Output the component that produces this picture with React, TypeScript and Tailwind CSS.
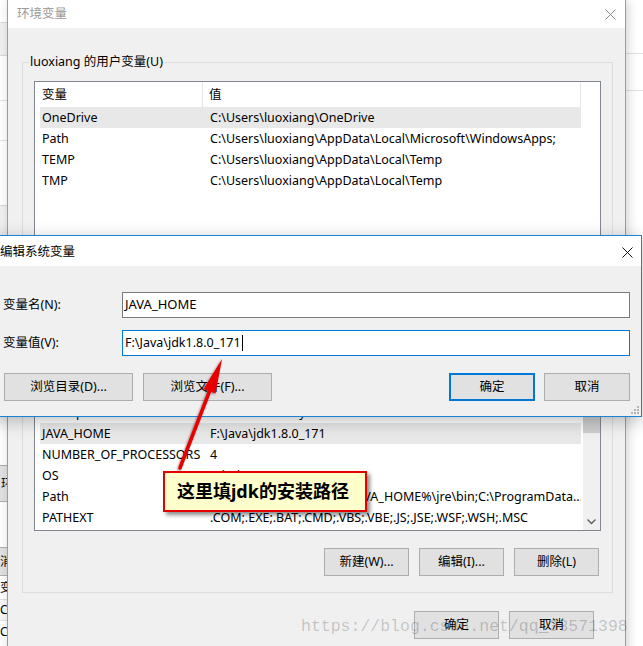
import clsx from 'clsx';

const ui = "font-['Noto_Sans','Noto_Sans_CJK_SC',sans-serif]";

type Row = { name: string; value: string; selected?: boolean };

const userVars: Row[] = [
  { name: 'OneDrive', value: 'C:\\Users\\luoxiang\\OneDrive', selected: true },
  { name: 'Path', value: 'C:\\Users\\luoxiang\\AppData\\Local\\Microsoft\\WindowsApps;' },
  { name: 'TEMP', value: 'C:\\Users\\luoxiang\\AppData\\Local\\Temp' },
  { name: 'TMP', value: 'C:\\Users\\luoxiang\\AppData\\Local\\Temp' },
];

const systemVars: Row[] = [
  { name: 'ComSpec', value: 'C:\\WINDOWS\\system32\\cmd.exe' },
  { name: 'JAVA_HOME', value: 'F:\\Java\\jdk1.8.0_171', selected: true },
  { name: 'NUMBER_OF_PROCESSORS', value: '4' },
  { name: 'OS', value: 'Windows_NT' },
  { name: 'Path', value: 'C:\\%JAVA_HOME%\\bin;%JAVA_HOME%\\jre\\bin;C:\\ProgramData...' },
  { name: 'PATHEXT', value: '.COM;.EXE;.BAT;.CMD;.VBS;.VBE;.JS;.JSE;.WSF;.WSH;.MSC' },
];

function CloseIcon({ color }: { color: string }) {
  return (
    <svg width="11" height="11" viewBox="0 0 11 11">
      <path d="M0.5 0.5 L10.5 10.5 M10.5 0.5 L0.5 10.5" stroke={color} strokeWidth="1" />
    </svg>
  );
}

function WinButton({ label, primary, className }: { label: string; primary?: boolean; className?: string }) {
  return (
    <div
      className={clsx(
        'flex h-[28px] items-center justify-center bg-[#e1e1e1] pt-px text-[12.5px] text-black',
        primary ? 'border-2 border-[#0078d7]' : 'border border-[#adadad]',
        className,
      )}
    >
      {label}
    </div>
  );
}

function VarList({ rows, height, scroll }: { rows: Row[]; height: string; scroll?: boolean }) {
  return (
    <div className={clsx('flex border border-[#828790] bg-white text-[12.5px]', height)}>
      <div className="ml-[5px] flex w-[541px] flex-col overflow-hidden">
        <div className="flex h-[25px] shrink-0 items-center">
          <span className="flex h-full w-[163px] items-center border-r border-[#e5e5e5] pl-[2px] pt-[2px]">变量</span>
          <span className="flex h-full flex-1 items-center border-r border-[#e5e5e5] pl-[6px] pt-[2px]">值</span>
        </div>
        {rows.map((r) => (
          <div
            key={r.name}
            className={clsx('flex h-[21px] shrink-0 items-center pt-px', r.selected && 'bg-[#e8e8e8]')}
          >
            <span className="w-[164px] overflow-hidden whitespace-nowrap pl-[2px]">{r.name}</span>
            <span className="flex-1 overflow-hidden whitespace-nowrap pl-[6px]">{r.value}</span>
          </div>
        ))}
      </div>
      <div className="flex-1" />
      {scroll && (
        <div className="flex w-[17px] flex-col bg-[#f0f0f0]">
          <div className="h-[17px]" />
          <div className="h-[39px] bg-[#cdcdcd]" />
          <div className="flex-1" />
          <div className="flex h-[17px] items-center justify-center">
            <svg width="9" height="6" viewBox="0 0 9 6">
              <path d="M0.5 0.5 L4.5 4.5 L8.5 0.5" fill="none" stroke="#606060" strokeWidth="1.4" />
            </svg>
          </div>
        </div>
      )}
    </div>
  );
}

function BackWindow() {
  return (
    <div className="absolute inset-0 flex justify-between bg-white text-[12px] text-black">
      <div className="flex w-[7px] flex-col overflow-hidden">
        <div className="h-[22px] bg-white" />
        <div className="h-[33px] border-t border-[#d9d9d9] bg-[#f0f0f0]" />
        <div className="h-[45px] border-t border-[#d9d9d9] bg-white" />
        <div className="h-[40px] border-t border-[#e3e3e3] bg-white" />
        <div className="h-[65px] border-t border-[#e3e3e3] bg-white" />
        <div className="h-[30px] border-t border-[#d9d9d9] bg-[#f0f0f0]" />
        <div className="h-[182px] bg-white" />
        <div className="h-[48px] bg-white" />
        <div className="flex h-[37px] items-center border-y border-[#adadad] bg-[#e1e1e1] pl-[1px]">
          <span className="whitespace-nowrap">环</span>
        </div>
        <div className="h-[45px] bg-white" />
        <div className="flex h-[29px] items-center border-y border-[#adadad] bg-[#e1e1e1]">
          <span className="whitespace-nowrap">消</span>
        </div>
        <div className="flex h-[24px] items-center border-b border-[#e3e3e3]">
          <span className="whitespace-nowrap">变</span>
        </div>
        <div className="flex h-[21px] items-center border-b border-[#e3e3e3] bg-[#f7f7f7]">
          <span>C</span>
        </div>
        <div className="flex h-[21px] items-center">
          <span>C</span>
        </div>
      </div>
      <div className="flex w-[17px] flex-col">
        <div className="h-[53px]" />
        <div className="h-[37px] border-t border-[#e3e3e3]" />
        <div className="border-t border-[#e3e3e3]" />
      </div>
    </div>
  );
}

function EnvDialog() {
  return (
    <div className="absolute left-[7px] top-0 flex h-[660px] w-[619px] flex-col border-x border-[#9c9c9c] bg-[#f0f0f0] text-[12.5px] text-black shadow-[2px_0_10px_rgba(0,0,0,0.18)]">
      <div className="flex h-[28px] shrink-0 items-center justify-between bg-white pl-[9px] pr-[9px]">
        <span className="text-[#999999]">环境变量</span>
        <CloseIcon color="#8a8a8a" />
      </div>
      <div className="flex flex-col pl-[14px] pr-[12px] pt-[26px]">
        <fieldset className="border border-[#dcdcdc] pb-[12px]">
          <legend className="ml-[6px] px-[1px] leading-[16px]">luoxiang 的用户变量(U)</legend>
          <div className="px-[11px]">
            <div className="mt-[11px]">
              <VarList rows={userVars} height="h-[190px]" />
            </div>
            <div className="mt-[13px] flex justify-end gap-[10px] pr-[2px]">
              <WinButton label="新建(N)..." className="w-[85px]" />
              <WinButton label="编辑(E)..." className="w-[85px]" />
              <WinButton label="删除(D)" className="w-[85px]" />
            </div>
          </div>
        </fieldset>
        <fieldset className="mt-[24px] border border-[#dcdcdc] pb-[16px]">
          <legend className="ml-[6px] px-[1px] leading-[16px]">系统变量(S)</legend>
          <div className="px-[11px]">
            <div className="mt-[11px]">
              <VarList rows={systemVars} height="h-[155px]" scroll />
            </div>
            <div className="mt-[17px] flex justify-end gap-[10px] pr-[2px]">
              <WinButton label="新建(W)..." className="w-[85px]" />
              <WinButton label="编辑(I)..." className="w-[85px]" />
              <WinButton label="删除(L)" className="w-[85px]" />
            </div>
          </div>
        </fieldset>
        <div className="mt-[18px] flex justify-end gap-[10px] pr-[19px]">
          <WinButton label="确定" className="w-[85px]" />
          <WinButton label="取消" className="w-[85px]" />
        </div>
      </div>
    </div>
  );
}

function EditDialog() {
  return (
    <div className="absolute left-[-14px] top-[235px] flex h-[182px] w-[656px] flex-col border border-[#1883d7] bg-[#f0f0f0] text-[12.5px] text-black shadow-[0_4px_16px_rgba(0,0,0,0.25)]">
      <div className="flex h-[30px] shrink-0 items-center justify-between bg-white pl-[13px] pr-[8px] pt-[2px]">
        <span>编辑系统变量</span>
        <CloseIcon color="#111111" />
      </div>
      <div className="flex flex-col pl-[16px] pr-[11px] pt-[26px]">
        <div className="flex h-[26px] items-center">
          <span className="w-[119px]">变量名(N):</span>
          <div className="flex h-[26px] flex-1 items-center border border-[#7a7a7a] bg-white pl-[2px] text-[13px]">
            JAVA_HOME
          </div>
        </div>
        <div className="mt-[12px] flex h-[26px] items-center">
          <span className="w-[119px]">变量值(V):</span>
          <div className="flex h-[26px] flex-1 items-center border border-[#0078d7] bg-white pl-[2px]">
            <span>F:\Java\jdk1.8.0_171</span>
            <span className="ml-[1px] h-[16px] w-px bg-black" />
          </div>
        </div>
        <div className="mt-[17px] flex items-center">
          <WinButton label="浏览目录(D)..." className="ml-[1px] w-[129px]" />
          <WinButton label="浏览文件(F)..." className="ml-[10px] w-[129px]" />
          <WinButton label="确定" primary className="ml-auto w-[86px]" />
          <WinButton label="取消" className="ml-[9px] w-[86px]" />
        </div>
      </div>
      <svg className="absolute bottom-[2px] right-[2px]" width="8" height="8" viewBox="0 0 8 8">
        <g fill="#b5b5b5">
          <rect x="6" y="0" width="2" height="2" />
          <rect x="3" y="3" width="2" height="2" />
          <rect x="6" y="3" width="2" height="2" />
          <rect x="0" y="6" width="2" height="2" />
          <rect x="3" y="6" width="2" height="2" />
          <rect x="6" y="6" width="2" height="2" />
        </g>
      </svg>
    </div>
  );
}

function Arrow() {
  return (
    <svg className="pointer-events-none absolute left-0 top-0" width="643" height="646" viewBox="0 0 643 646">
      <defs>
        <filter id="sh" x="-50%" y="-50%" width="200%" height="200%">
          <feDropShadow dx="-1" dy="1" stdDeviation="1" floodColor="#000" floodOpacity="0.45" />
        </filter>
      </defs>
      <g filter="url(#sh)">
        <line x1="180" y1="468" x2="210" y2="390" stroke="#e60000" strokeWidth="3.5" strokeLinecap="round" />
        <polygon points="222,359 215.5,393.5 203.5,389" fill="#e60000" />
      </g>
    </svg>
  );
}

export default function App() {
  return (
    <div className={clsx('relative h-[646px] w-[643px] overflow-hidden bg-white', ui)}>
      <BackWindow />
      <EnvDialog />
      <EditDialog />
      <Arrow />
      <div className="absolute left-[163px] top-[471px] flex h-[41px] w-[204px] items-center border-2 border-[#e60000] bg-[#ffffcc] pl-[12px] text-[18px] font-bold text-black shadow-[3px_3px_4px_rgba(0,0,0,0.45)]">
        这里填jdk的安装路径
      </div>
      <div className="pointer-events-none absolute left-[301px] top-[615px] font-['Liberation_Mono',monospace] text-[16.5px] leading-[24px] text-black/20">
        https://blog.csdn.net/qq_33571398
      </div>
    </div>
  );
}
